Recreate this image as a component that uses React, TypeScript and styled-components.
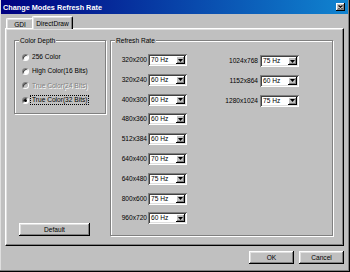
import React from "react";
import styled, { createGlobalStyle } from "styled-components";

const GlobalStyle = createGlobalStyle`
  html, body {
    margin: 0;
    padding: 0;
    background: #c0c0c0;
  }
  body {
    font-family: "Liberation Sans", Arial, sans-serif;
  }
`;

const Window = styled.div`
  width: 350px;
  height: 272px;
  box-sizing: border-box;
  padding: 0 2px 2px 1px;
  background: #c0c0c0;
  box-shadow: inset -1px -1px #000, inset -2px -2px #808080, inset 1px 0 #dfdfdf;
  display: flex;
  flex-direction: column;
  font-size: 6.6px;
  color: #000;
`;

const TitleBar = styled.div`
  height: 14px;
  flex: none;
  display: flex;
  align-items: center;
  justify-content: space-between;
  padding: 0 3px 0 2px;
  background: linear-gradient(90deg, #000080, #1084d0);
`;

const Title = styled.span`
  color: #fff;
  font-weight: bold;
  font-size: 7.3px;
  white-space: nowrap;
`;

const CloseButton = styled.div`
  width: 9px;
  height: 8px;
  box-sizing: border-box;
  background: #c0c0c0;
  box-shadow: inset -1px -1px #000, inset 1px 1px #fff, inset -2px -2px #808080;
  display: flex;
  align-items: center;
  justify-content: center;
`;

const TabStrip = styled.div`
  height: 14px;
  flex: none;
  display: flex;
  align-items: flex-end;
  padding-left: 5px;
`;

const Tab = styled.div<{ $active?: boolean; $width: number }>`
  box-sizing: border-box;
  width: ${(p) => p.$width}px;
  height: ${(p) => (p.$active ? 13 : 10)}px;
  margin-bottom: ${(p) => (p.$active ? -1 : 0)}px;
  margin-left: ${(p) => (p.$active ? -2 : 0)}px;
  padding-top: ${(p) => (p.$active ? 0 : 1)}px;
  display: flex;
  align-items: center;
  justify-content: center;
  background: #c0c0c0;
  border-top: 1px solid #fff;
  border-left: 1px solid #fff;
  border-right: 1px solid #000;
  border-radius: 2px 2px 0 0;
  box-shadow: inset -1px 0 #808080, inset 1px 1px #dfdfdf;
  position: relative;
  z-index: ${(p) => (p.$active ? 1 : 0)};
  white-space: nowrap;
`;

const Panel = styled.div`
  height: 218px;
  flex: none;
  box-sizing: border-box;
  margin: 0 4px;
  border-top: 1px solid #fff;
  border-left: 1px solid #fff;
  border-right: 1px solid #000;
  border-bottom: 1px solid #000;
  box-shadow: inset -1px -1px #808080, inset 1px 1px #dfdfdf;
  padding: 11px 0 9px 8px;
  display: flex;
  gap: 4px;
`;

const LeftColumn = styled.div`
  width: 92px;
  display: flex;
  flex-direction: column;
  justify-content: space-between;
`;

const Group = styled.div`
  position: relative;
  box-sizing: border-box;
  border: 1px solid #808080;
  box-shadow: inset 1px 1px #fff, 1px 1px #fff;
`;

const ColorGroup = styled(Group)`
  padding: 9px 0 6px 7px;
`;

const RefreshGroup = styled(Group)`
  width: 223px;
  padding: 13px 0 0 0;
  display: flex;
  align-items: flex-start;
`;

const Caption = styled.span`
  position: absolute;
  top: -5px;
  left: 4px;
  padding: 0 1px;
  line-height: 9px;
  background: #c0c0c0;
  white-space: nowrap;
`;

const RadioRow = styled.div`
  height: 14.3px;
  display: flex;
  align-items: center;
`;

const RadioCircle = styled.span<{ $disabled?: boolean }>`
  width: 7px;
  height: 7px;
  flex: none;
  box-sizing: border-box;
  border-radius: 50%;
  background: ${(p) => (p.$disabled ? "#c0c0c0" : "#fff")};
  border: 1px solid;
  border-color: #808080 #fff #fff #808080;
  box-shadow: inset 1px 1px #404040;
  display: flex;
  align-items: center;
  justify-content: center;
`;

const RadioDot = styled.span`
  width: 3px;
  height: 3px;
  border-radius: 50%;
  background: #000;
`;

const RadioText = styled.span<{ $disabled?: boolean; $focused?: boolean }>`
  margin-left: ${(p) => (p.$focused ? 2 : 3)}px;
  padding: 0 ${(p) => (p.$focused ? 1 : 0)}px;
  line-height: 8px;
  white-space: nowrap;
  color: ${(p) => (p.$disabled ? "#808080" : "#000")};
  text-shadow: ${(p) => (p.$disabled ? "1px 1px #fff" : "none")};
  outline: ${(p) => (p.$focused ? "1px dotted #000" : "none")};
`;

const Button = styled.button<{ $width: number }>`
  width: ${(p) => p.$width}px;
  height: 13px;
  flex: none;
  padding: 0;
  border: none;
  background: #c0c0c0;
  box-shadow: inset -1px -1px #000, inset 1px 1px #fff, inset -2px -2px #808080,
    inset 2px 2px #dfdfdf;
  font-family: inherit;
  font-size: 6.6px;
  color: #000;
`;

const DefaultButton = styled(Button)`
  margin-left: 5px;
  align-self: flex-start;
`;

const RateColumn = styled.div<{ $labelWidth: number; $offset: number }>`
  display: grid;
  grid-template-columns: ${(p) => p.$labelWidth}px 39px;
  grid-auto-rows: 12px;
  row-gap: 7.8px;
  margin-top: ${(p) => p.$offset}px;
`;

const RateLabel = styled.span<{ $gap: number }>`
  text-align: right;
  padding-right: ${(p) => p.$gap}px;
  line-height: 12px;
  white-space: nowrap;
`;

const Combo = styled.div`
  width: 39px;
  height: 12px;
  box-sizing: border-box;
  background: #fff;
  box-shadow: inset 1px 1px #808080, inset -1px -1px #fff, inset 2px 2px #404040,
    inset -2px -2px #dfdfdf;
  display: flex;
  align-items: center;
  justify-content: space-between;
  padding: 2px 2px 2px 3px;
`;

const ComboValue = styled.span`
  line-height: 8px;
  white-space: nowrap;
`;

const DropButton = styled.div`
  width: 9px;
  height: 8px;
  box-sizing: border-box;
  background: #c0c0c0;
  box-shadow: inset -1px -1px #000, inset 1px 1px #fff, inset -2px -2px #808080;
  display: flex;
  align-items: center;
  justify-content: center;
`;

const Footer = styled.div`
  display: flex;
  justify-content: flex-end;
  gap: 5px;
  padding: 5px 4px 0 0;
`;

const colorModes = [
  { label: "256 Color" },
  { label: "High Color(16 Bits)" },
  { label: "True Color(24 Bits)", disabled: true },
  { label: "True Color(32 Bits)", checked: true },
];

const leftRates = [
  ["320x200", "70 Hz"],
  ["320x240", "60 Hz"],
  ["400x300", "60 Hz"],
  ["480x360", "60 Hz"],
  ["512x384", "60 Hz"],
  ["640x400", "70 Hz"],
  ["640x480", "75 Hz"],
  ["800x600", "75 Hz"],
  ["960x720", "60 Hz"],
];

const rightRates = [
  ["1024x768", "75 Hz"],
  ["1152x864", "60 Hz"],
  ["1280x1024", "75 Hz"],
];

function RateSelect({ value }: { value: string }) {
  return (
    <Combo>
      <ComboValue>{value}</ComboValue>
      <DropButton>
        <svg width="5" height="3" viewBox="0 0 5 3">
          <polygon points="0,0 5,0 2.5,3" fill="#000" />
        </svg>
      </DropButton>
    </Combo>
  );
}

export default function App() {
  return (
    <>
      <GlobalStyle />
      <Window>
        <TitleBar>
          <Title>Change Modes Refresh Rate</Title>
          <CloseButton>
            <svg width="5" height="4" viewBox="0 0 5 4">
              <path d="M0.5 0.5 L4.5 3.5 M4.5 0.5 L0.5 3.5" stroke="#000" strokeWidth="1.2" />
            </svg>
          </CloseButton>
        </TitleBar>
        <TabStrip>
          <Tab $width={28}>GDI</Tab>
          <Tab $active $width={41}>
            DirectDraw
          </Tab>
        </TabStrip>
        <Panel>
          <LeftColumn>
            <ColorGroup>
              <Caption>Color Depth</Caption>
              {colorModes.map((m) => (
                <RadioRow key={m.label}>
                  <RadioCircle $disabled={m.disabled}>{m.checked && <RadioDot />}</RadioCircle>
                  <RadioText $disabled={m.disabled} $focused={m.checked}>
                    {m.label}
                  </RadioText>
                </RadioRow>
              ))}
            </ColorGroup>
            <DefaultButton $width={71}>Default</DefaultButton>
          </LeftColumn>
          <RefreshGroup>
            <Caption>Refresh Rate</Caption>
            <RateColumn $labelWidth={37} $offset={0}>
              {leftRates.map(([res, hz]) => (
                <React.Fragment key={res}>
                  <RateLabel $gap={1}>{res}</RateLabel>
                  <RateSelect value={hz} />
                </React.Fragment>
              ))}
            </RateColumn>
            <RateColumn $labelWidth={73} $offset={1}>
              {rightRates.map(([res, hz]) => (
                <React.Fragment key={res}>
                  <RateLabel $gap={2}>{res}</RateLabel>
                  <RateSelect value={hz} />
                </React.Fragment>
              ))}
            </RateColumn>
          </RefreshGroup>
        </Panel>
        <Footer>
          <Button $width={45}>OK</Button>
          <Button $width={45}>Cancel</Button>
        </Footer>
      </Window>
    </>
  );
}
